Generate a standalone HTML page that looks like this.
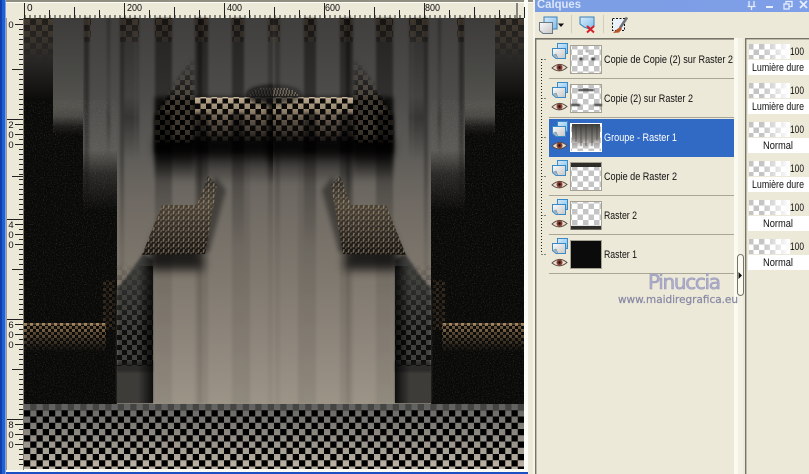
<!DOCTYPE html>
<html>
<head>
<meta charset="utf-8">
<style>
html,body{margin:0;padding:0;background:#ece9d8;width:809px;height:474px;overflow:hidden}
svg{display:block}
text{font-family:"Liberation Sans",sans-serif}
</style>
</head>
<body>
<svg width="809" height="474" viewBox="0 0 809 474" xmlns="http://www.w3.org/2000/svg">
<defs>
<linearGradient id="curt" gradientUnits="userSpaceOnUse" x1="0" y1="18" x2="0" y2="404">
<stop offset="0" stop-color="#403f3d"/><stop offset=".2" stop-color="#4d4c4a"/><stop offset=".35" stop-color="#5e5c58"/><stop offset=".47" stop-color="#6e6962"/><stop offset=".68" stop-color="#80796f"/><stop offset=".85" stop-color="#8f877c"/><stop offset="1" stop-color="#9c9487"/>
</linearGradient>
<linearGradient id="stripeA" x1="0" y1="0" x2="0" y2="1">
<stop offset="0" stop-color="#000" stop-opacity=".45"/><stop offset=".3" stop-color="#000" stop-opacity=".34"/><stop offset=".45" stop-color="#000" stop-opacity=".22"/><stop offset=".6" stop-color="#000" stop-opacity=".09"/><stop offset="1" stop-color="#000" stop-opacity=".07"/>
</linearGradient>
<linearGradient id="stripeB" gradientUnits="userSpaceOnUse" x1="0" y1="18" x2="0" y2="160">
<stop offset="0" stop-color="#000" stop-opacity=".3"/><stop offset=".55" stop-color="#000" stop-opacity=".13"/><stop offset=".7" stop-color="#000" stop-opacity=".35"/><stop offset="1" stop-color="#000" stop-opacity="0"/>
</linearGradient>
<linearGradient id="cornerG" x1="0" y1="0" x2="0" y2="1">
<stop offset="0" stop-color="#3e3b37"/><stop offset=".45" stop-color="#2b2a28"/><stop offset=".85" stop-color="#151412"/><stop offset="1" stop-color="#090908"/>
</linearGradient>
<linearGradient id="col2G" gradientUnits="userSpaceOnUse" x1="0" y1="18" x2="0" y2="135">
<stop offset="0" stop-color="#3d3c3a"/><stop offset=".5" stop-color="#4a4a47"/><stop offset=".75" stop-color="#55544f"/><stop offset=".84" stop-color="#4a4945"/><stop offset=".93" stop-color="#1c1b19"/><stop offset="1" stop-color="#0a0a09"/>
</linearGradient>
<linearGradient id="col3G" gradientUnits="userSpaceOnUse" x1="0" y1="150" x2="0" y2="210">
<stop offset="0" stop-color="#0a0a09" stop-opacity="0"/><stop offset=".4" stop-color="#0a0a09" stop-opacity=".65"/><stop offset="1" stop-color="#0a0a09" stop-opacity="1"/>
</linearGradient>
<linearGradient id="bandDark" gradientUnits="userSpaceOnUse" x1="0" y1="97" x2="0" y2="184">
<stop offset="0" stop-color="#000" stop-opacity=".7"/><stop offset=".35" stop-color="#000" stop-opacity=".85"/><stop offset=".58" stop-color="#000" stop-opacity=".82"/><stop offset=".82" stop-color="#000" stop-opacity=".28"/><stop offset="1" stop-color="#000" stop-opacity="0"/>
</linearGradient>
<linearGradient id="sideDark" gradientUnits="userSpaceOnUse" x1="0" y1="55" x2="0" y2="178">
<stop offset="0" stop-color="#000" stop-opacity="0"/><stop offset=".35" stop-color="#000" stop-opacity=".4"/><stop offset=".68" stop-color="#000" stop-opacity=".82"/><stop offset="1" stop-color="#000" stop-opacity="0"/>
</linearGradient>
<linearGradient id="tanFade" gradientUnits="userSpaceOnUse" x1="0" y1="97" x2="0" y2="141">
<stop offset="0" stop-color="#bcab90"/><stop offset=".25" stop-color="#9c8c74"/><stop offset=".55" stop-color="#5b5044"/><stop offset="1" stop-color="#2a2622"/>
</linearGradient>
<linearGradient id="sideFadeM" gradientUnits="userSpaceOnUse" x1="0" y1="55" x2="0" y2="142">
<stop offset="0" stop-color="#fff" stop-opacity="0"/><stop offset=".5" stop-color="#fff" stop-opacity=".55"/><stop offset="1" stop-color="#fff" stop-opacity=".55"/>
</linearGradient>
<linearGradient id="topFadeM" gradientUnits="userSpaceOnUse" x1="0" y1="18" x2="0" y2="60">
<stop offset="0" stop-color="#fff" stop-opacity=".6"/><stop offset=".6" stop-color="#fff" stop-opacity=".28"/><stop offset="1" stop-color="#fff" stop-opacity="0"/>
</linearGradient>
<linearGradient id="lowBandM" gradientUnits="userSpaceOnUse" x1="0" y1="323" x2="0" y2="352">
<stop offset="0" stop-color="#fff" stop-opacity=".9"/><stop offset=".5" stop-color="#fff" stop-opacity=".45"/><stop offset="1" stop-color="#fff" stop-opacity="0"/>
</linearGradient>
<linearGradient id="lowCellM" gradientUnits="userSpaceOnUse" x1="0" y1="262" x2="0" y2="335">
<stop offset="0" stop-color="#fff" stop-opacity="0"/><stop offset="1" stop-color="#fff" stop-opacity=".8"/>
</linearGradient>
<linearGradient id="edgeShadow" x1="0" y1="0" x2="1" y2="0">
<stop offset="0" stop-color="#000" stop-opacity="0"/><stop offset="1" stop-color="#000" stop-opacity=".78"/>
</linearGradient>
<linearGradient id="floorG" gradientUnits="userSpaceOnUse" x1="0" y1="404" x2="0" y2="469">
<stop offset="0" stop-color="#626260"/><stop offset=".5" stop-color="#8f8b83"/><stop offset="1" stop-color="#c0b6a7"/>
</linearGradient>
<linearGradient id="paraG" gradientUnits="userSpaceOnUse" x1="0" y1="176" x2="0" y2="255">
<stop offset="0" stop-color="#2a2825"/><stop offset=".36" stop-color="#4a4338"/><stop offset=".7" stop-color="#2f2a25"/><stop offset="1" stop-color="#141210"/>
</linearGradient>
<linearGradient id="whiteFade" x1="0" y1="0" x2="1" y2="0">
<stop offset="0" stop-color="#fff" stop-opacity="0"/><stop offset="1" stop-color="#fff"/>
</linearGradient>
<linearGradient id="thumbG" x1="0" y1="0" x2="0" y2="1">
<stop offset="0" stop-color="#3e3e3c"/><stop offset=".6" stop-color="#87837e"/><stop offset="1" stop-color="#8f8a84" stop-opacity="0"/>
</linearGradient>
<linearGradient id="ptitle" x1="0" y1="0" x2="1" y2="0">
<stop offset="0" stop-color="#7b9ee3"/><stop offset="1" stop-color="#7f9fe8"/>
</linearGradient>
<linearGradient id="iconBack" x1="0" y1="0" x2="1" y2="1">
<stop offset="0" stop-color="#d7ecfb"/><stop offset="1" stop-color="#7fbdec"/>
</linearGradient>
<linearGradient id="iconFront" x1="0" y1="0" x2="1" y2="1">
<stop offset="0" stop-color="#fbfbfb"/><stop offset="1" stop-color="#c6c6c6"/>
</linearGradient>

<filter id="b1" x="-60%" y="-10%" width="220%" height="120%"><feGaussianBlur stdDeviation="1.4"/></filter>
<filter id="b2" x="-30%" y="-30%" width="160%" height="160%"><feGaussianBlur stdDeviation="2.5"/></filter>
<filter id="b5" x="-30%" y="-60%" width="160%" height="220%"><feGaussianBlur stdDeviation="5"/></filter>
<filter id="tb" x="-30%" y="-30%" width="160%" height="160%"><feGaussianBlur stdDeviation=".7"/></filter>
<filter id="noise" x="0" y="0" width="100%" height="100%">
<feTurbulence type="fractalNoise" baseFrequency=".9" numOctaves="2" seed="4"/>
<feColorMatrix values="0 0 0 0 .32  0 0 0 0 .3  0 0 0 0 .27  1.6 0 0 0 -.85"/>
</filter>

<mask id="mSide" maskUnits="userSpaceOnUse" x="0" y="0" width="809" height="474"><path d="M194 55L155 118V143H194Z" fill="url(#sideFadeM)" filter="url(#b2)"/></mask>
<mask id="mTop" maskUnits="userSpaceOnUse" x="0" y="0" width="809" height="474"><rect x="20" y="18" width="260" height="45" fill="url(#topFadeM)"/></mask>
<mask id="mLow" maskUnits="userSpaceOnUse" x="0" y="0" width="809" height="474"><rect x="20" y="320" width="100" height="35" fill="url(#lowBandM)"/></mask>
<mask id="mCell" maskUnits="userSpaceOnUse" x="0" y="0" width="809" height="474"><rect x="117" y="260" width="36" height="110" fill="url(#lowCellM)"/></mask>

<pattern id="chkTop" patternUnits="userSpaceOnUse" width="12" height="12" x="24" y="19">
<rect x="0" y="0" width="6" height="6" fill="#4a3a28" fill-opacity=".75"/><rect x="6" y="0" width="6" height="6" fill="#0c0a08"/><rect x="0" y="6" width="6" height="6" fill="#0c0a08"/><rect x="6" y="6" width="6" height="6" fill="#4a3a28" fill-opacity=".75"/>
</pattern>
<pattern id="chkSide" patternUnits="userSpaceOnUse" width="10" height="10" x="155" y="60">
<rect width="5" height="5" fill="#6f6250"/><rect x="5" y="5" width="5" height="5" fill="#6f6250"/><rect x="5" width="5" height="5" fill="#000"/><rect y="5" width="5" height="5" fill="#000"/>
</pattern>
<pattern id="chkBand" patternUnits="userSpaceOnUse" width="11" height="11" x="195" y="98">
<rect x="5.5" width="5.5" height="5.5" fill="#0a0908"/><rect y="5.5" width="5.5" height="5.5" fill="#0a0908"/>
</pattern>
<pattern id="chkLow" patternUnits="userSpaceOnUse" width="6" height="6" x="24" y="323">
<rect width="3" height="3" fill="#a8875f"/><rect x="3" y="3" width="3" height="3" fill="#8a6e4c"/>
</pattern>
<pattern id="chkDim" patternUnits="userSpaceOnUse" width="6" height="6" x="103" y="270">
<rect width="3" height="3" fill="#6b5238"/><rect x="3" y="3" width="3" height="3" fill="#4a3926"/>
</pattern>
<pattern id="chkDark" patternUnits="userSpaceOnUse" width="10" height="10" x="117" y="270">
<rect x="5" width="5" height="5" fill="#000"/><rect y="5" width="5" height="5" fill="#000"/>
</pattern>
<pattern id="chkFloor" patternUnits="userSpaceOnUse" width="12.5" height="12.5" x="24" y="404">
<rect x="6.25" width="6.25" height="6.25" fill="#000"/><rect y="6.25" width="6.25" height="6.25" fill="#000"/>
</pattern>
<pattern id="meshDots" patternUnits="userSpaceOnUse" width="5" height="5.5" x="142" y="205">
<path d="M1.2 .3L2.8 .3 2 3.8 .4 3.8Z" fill="#cdb998"/><path d="M3.7 3 5 3 4.4 5.4 3 5.4Z" fill="#a4927a"/>
</pattern>
<pattern id="thumbChk" patternUnits="userSpaceOnUse" width="11" height="11">
<rect width="11" height="11" fill="#fff"/><rect width="5.5" height="5.5" fill="#c4c4c4"/><rect x="5.5" y="5.5" width="5.5" height="5.5" fill="#c4c4c4"/>
</pattern>
<pattern id="hTick" patternUnits="userSpaceOnUse" width="5" height="4" x="24.5" y="15">
<rect width="1" height="4" fill="#222"/>
</pattern>
<pattern id="vTick" patternUnits="userSpaceOnUse" width="4" height="5" x="19" y="19">
<rect width="4" height="1" fill="#222"/>
</pattern>

<g id="half">
<rect x="83" y="18" width="192" height="386" fill="url(#curt)"/>
<g filter="url(#b1)">
<rect x="84" y="18" width="5" height="386" fill="url(#stripeA)"/>
<rect x="107" y="18" width="3" height="160" fill="url(#stripeB)"/>
<rect x="120" y="18" width="4" height="386" fill="url(#stripeA)"/>
<rect x="124" y="18" width="11" height="150" fill="url(#stripeB)"/>
<rect x="136" y="18" width="3" height="140" fill="url(#stripeB)"/>
<rect x="155" y="18" width="17" height="386" fill="url(#stripeA)"/>
<rect x="195" y="18" width="13" height="386" fill="url(#stripeA)"/>
<rect x="198" y="18" width="4" height="386" fill="url(#stripeA)"/>
<rect x="232" y="18" width="12" height="386" fill="url(#stripeA)"/>
<rect x="244" y="150" width="6" height="254" fill="#000" fill-opacity=".08"/>
<rect x="268" y="18" width="5" height="386" fill="url(#stripeA)" opacity=".6"/>
</g>
<rect x="24" y="18" width="29" height="84" fill="url(#cornerG)"/>
<rect x="53" y="18" width="30" height="117" fill="url(#col2G)"/>
<rect x="24" y="100" width="29" height="304" fill="#090908"/>
<rect x="53" y="134" width="30" height="270" fill="#090908"/>
<rect x="83" y="150" width="34" height="60" fill="url(#col3G)"/>
<rect x="83" y="210" width="34" height="194" fill="#090908"/>
<rect x="24" y="100" width="93" height="304" filter="url(#noise)" opacity=".55"/>
<g mask="url(#mTop)">
<rect x="24" y="18" width="29" height="42" fill="url(#chkTop)"/>
<rect x="84" y="18" width="7" height="24" fill="url(#chkTop)"/>
<rect x="120" y="18" width="19" height="24" fill="url(#chkTop)"/>
<rect x="155" y="18" width="17" height="24" fill="url(#chkTop)"/>
<rect x="195" y="18" width="13" height="24" fill="url(#chkTop)"/>
<rect x="232" y="18" width="12" height="24" fill="url(#chkTop)"/>
<rect x="268" y="18" width="7" height="24" fill="url(#chkTop)"/>
</g>
<path d="M194 55L155 118V178H194Z" fill="url(#sideDark)" filter="url(#b2)"/>
<rect x="155" y="97" width="125" height="87" fill="url(#bandDark)" filter="url(#b2)"/>
<rect x="155" y="55" width="40" height="88" fill="url(#chkSide)" mask="url(#mSide)"/>
<rect x="195" y="97" width="80" height="44" fill="url(#tanFade)"/>
<rect x="195" y="97" width="80" height="44" fill="url(#chkBand)"/>
<rect x="195" y="97" width="80" height="2" fill="#d4c4aa" fill-opacity=".45"/>
<rect x="195" y="113" width="13" height="40" fill="#000" fill-opacity=".5" filter="url(#b1)"/>
<rect x="232" y="113" width="12" height="40" fill="#000" fill-opacity=".5" filter="url(#b1)"/>
<rect x="155" y="113" width="17" height="40" fill="#000" fill-opacity=".45" filter="url(#b1)"/>
<rect x="155" y="138" width="125" height="18" fill="#0a0908" fill-opacity=".6" filter="url(#b5)"/>
<ellipse cx="274" cy="95" rx="27" ry="9" fill="#0c0b0a" fill-opacity=".65" filter="url(#b2)"/>
<path d="M250 95H275M252 93H275M255 91H275M260 89H275" stroke="#b4a488" stroke-width="1" stroke-dasharray="1.5 1.5"/>
<rect x="24" y="323" width="82" height="30" fill="url(#chkLow)" mask="url(#mLow)"/>
<rect x="24" y="323" width="82" height="2" fill="#c6a47a" fill-opacity=".3"/>
<rect x="103" y="280" width="12" height="50" fill="url(#chkDim)" opacity=".4"/>
<path d="M117 290L143 254L153 260V403H117Z" fill="#41403c" filter="url(#b1)"/>
<rect x="117" y="262" width="36" height="104" fill="url(#chkDark)" mask="url(#mCell)"/>
<rect x="117" y="366" width="36" height="37" fill="#3d3c39"/>
<rect x="117" y="362" width="36" height="10" fill="#141312" fill-opacity=".45" filter="url(#tb)"/>
<rect x="138" y="266" width="15" height="137" fill="url(#edgeShadow)"/>
<path d="M146 262L162 222H198L204 270H150Z" fill="#000" fill-opacity=".75" filter="url(#b5)"/>
<path d="M215 176L226 190L209 252H200Z" fill="#000" fill-opacity=".4" filter="url(#b2)"/>
<path d="M142 255L162 205H197L208 176L217 185L205 254Z" fill="url(#paraG)"/>
</g>
</defs>

<rect width="809" height="474" fill="#ece9d8"/>
<rect x="0" y="0" width="6" height="474" fill="#1f5fd8"/>
<rect x="0" y="0" width="2" height="474" fill="#0f3fa8"/>
<rect x="5" y="0" width="1" height="474" fill="#7fa3e0"/>
<rect x="6" y="0" width="521" height="474" fill="#fbfaf3"/>
<rect x="7" y="18" width="16" height="452" fill="#ece9d8"/>
<rect x="6" y="0" width="527" height="18" fill="#ece9d8"/>
<rect x="6" y="0" width="527" height="2" fill="#8f8d80"/>
<rect x="6" y="2" width="527" height="1" fill="#fdfdf8"/>
<rect x="6" y="18" width="1" height="452" fill="#9c9a8c"/>
<rect x="524" y="0" width="4" height="472" fill="#fdfdf8"/>
<rect x="6" y="472" width="522" height="2" fill="#1a50c4"/>

<rect x="24.5" y="15" width="500" height="3" fill="url(#hTick)"/>
<path d="M24.5 3V18M124.5 3V18M224.5 3V18M324.5 3V18M424.5 3V18M517 3V18M49.5 10V18M74.5 7V18M99.5 10V18M149.5 10V18M174.5 7V18M199.5 10V18M249.5 10V18M274.5 7V18M299.5 10V18M349.5 10V18M374.5 7V18M399.5 10V18M449.5 10V18M474.5 7V18M499.5 10V18M524.5 7V18" stroke="#222" stroke-width="1"/>
<text x="27" y="11" font-size="10" fill="#111">0</text>
<text x="127" y="11" font-size="10" fill="#111" textLength="15" lengthAdjust="spacingAndGlyphs">200</text>
<text x="227" y="11" font-size="10" fill="#111" textLength="15" lengthAdjust="spacingAndGlyphs">400</text>
<text x="325" y="11" font-size="10" fill="#111" textLength="15" lengthAdjust="spacingAndGlyphs">600</text>
<text x="425" y="11" font-size="10" fill="#111" textLength="15" lengthAdjust="spacingAndGlyphs">800</text>

<rect x="19" y="19" width="4" height="450" fill="url(#vTick)"/>
<path d="M7 119.5H23M7 219.5H23M7 319.5H23M7 419.5H23M12 69.5H23M12 176.5H23M12 269.5H23M12 369.5H23M15 24.5H23M15 124.5H23M15 134.5H23M15 144.5H23M15 224.5H23M15 234.5H23M15 244.5H23M15 324.5H23M15 334.5H23M15 344.5H23M15 424.5H23M15 434.5H23M15 444.5H23" stroke="#222" stroke-width="1"/>
<g font-size="9.5" fill="#111" text-anchor="middle">
<text x="11" y="28">0</text>
<text x="11" y="128">2</text><text x="11" y="138">0</text><text x="11" y="148">0</text>
<text x="11" y="228">4</text><text x="11" y="238">0</text><text x="11" y="248">0</text>
<text x="11" y="328">6</text><text x="11" y="338">0</text><text x="11" y="348">0</text>
<text x="11" y="428">8</text><text x="11" y="438">0</text><text x="11" y="448">0</text>
</g>

<rect x="23" y="18" width="1" height="452" fill="#7d7b70"/>
<rect x="24" y="18" width="500" height="1" fill="#7d7b70"/>
<use href="#half"/>
<use href="#half" transform="translate(548 0) scale(-1 1)"/>
<path d="M142 255L162 205H197L208 176L217 185L205 254Z" fill="url(#meshDots)" opacity=".5"/>
<path d="M406 255L386 205H351L340 176L331 185L343 254Z" fill="url(#meshDots)" opacity=".5"/>
<rect x="24" y="404" width="500" height="65" fill="url(#floorG)"/>
<rect x="24" y="404" width="500" height="65" fill="url(#chkFloor)"/>
<rect x="24" y="404" width="500" height="6" fill="#616160" fill-opacity=".7"/>

<rect x="533" y="0" width="276" height="474" fill="#ece9d8"/>
<rect x="533" y="0" width="2" height="474" fill="#f7f5ea"/>
<rect x="535" y="0" width="274" height="12" fill="url(#ptitle)"/>
<text x="537" y="8" font-size="11.5" font-weight="bold" fill="#dbe6fa" textLength="44" lengthAdjust="spacingAndGlyphs">Calques</text>
<g fill="none" stroke="#e6edfb" stroke-width="1.3">
<path d="M749 1V6M754 1V6M747.5 6.5H755.5M751.5 6.5V10"/>
<path d="M766 7H773" stroke-width="2"/>
<rect x="784" y="4" width="5" height="5"/><path d="M786 4V1.5H792V6.5H789"/>
<path d="M800 1L807 8M807 1L800 8" stroke-width="1.8"/>
</g>

<path d="M571.5 15V33M603.5 15V33" stroke="#d0cdbb"/>
<rect x="544" y="17" width="13" height="12" fill="url(#iconBack)" stroke="#3a7fb8"/>
<path d="M539.5 22.5H552.5V33.5H543L539.5 30.5Z" fill="url(#iconFront)" stroke="#6a7a85"/>
<path d="M558 23.5H564L561 27Z" fill="#111"/>
<path d="M580 17H594V26L589 29L584 27L580 24Z" fill="url(#iconBack)" stroke="#3a7fb8"/>
<path d="M587 26L594 32.5M594 26L587 32.5" stroke="#d6202a" stroke-width="2"/>
<rect x="612.5" y="18.5" width="12" height="12" fill="#eaf2fa" stroke="#111" stroke-dasharray="2 1.5"/>
<path d="M627 17.5L620 28" stroke="#6f6f78" stroke-width="2.6"/>
<path d="M620 27L616 30L613 33L619 32.5L622 29Z" fill="#b4552c"/>

<rect x="535" y="38" width="199" height="436" fill="#ece9d8"/>
<rect x="535" y="38" width="200" height="1.6" fill="#77756a"/>
<rect x="535" y="38" width="1.4" height="436" fill="#77756a"/>
<rect x="734" y="38" width="4" height="436" fill="#fbfaf0"/>
<rect x="738" y="38" width="5" height="436" fill="#f3f1e4"/>
<rect x="743" y="38" width="2" height="436" fill="#ece9d8"/>
<rect x="745" y="38" width="1.4" height="436" fill="#77756a"/>
<rect x="745" y="38" width="64" height="1.4" fill="#77756a"/>
<rect x="737.5" y="254.5" width="6" height="41" rx="3" fill="#fbfaf0" stroke="#77756a"/>
<path d="M738.5 272L742 275.5L738.5 279Z" fill="#111"/>

<path d="M541.5 59V254" stroke="#222" stroke-dasharray="1 2" fill="none"/>
<path d="M541.5 59.5H546M541.5 98.5H546M541.5 137.5H546M541.5 176.5H546M541.5 215.5H546M541.5 254.5H546" stroke="#222" stroke-dasharray="1 2"/>

<g fill="#a9a695">
<rect x="549" y="78" width="185" height="1"/>
<rect x="549" y="117" width="185" height="1"/>
<rect x="549" y="195" width="185" height="1"/>
<rect x="549" y="234" width="185" height="1"/>
<rect x="549" y="273" width="185" height="1"/>
</g>
<rect x="549" y="119" width="185" height="38" fill="#316ac5"/>

<g id="ic">
<rect x="557.5" y="43.5" width="10" height="10" fill="url(#iconBack)" stroke="#3a8ac8"/>
<path d="M552.5 48.5H565.5V58.5H556L552.5 55.5Z" fill="url(#iconFront)" stroke="#3a8ac8"/>
<path d="M552.5 55.5L556 54L558 58.5" fill="#9db7c9" stroke="#7a8d98" stroke-width=".6"/>
<path d="M552 68Q559.5 61 567 67.5Q559.5 74 552 68Z" fill="#e6ddd3" stroke="#5a4a42" stroke-width=".9"/>
<circle cx="559.5" cy="67.5" r="3" fill="#8a3f30"/>
<circle cx="559.5" cy="67.5" r="1.2" fill="#1c1211"/>
</g>
<use href="#ic" y="39"/>
<use href="#ic" y="78"/>
<use href="#ic" y="117"/>
<use href="#ic" y="156"/>
<use href="#ic" y="195"/>

<g stroke="#a5a294" stroke-width="1">
<rect x="570.5" y="45.5" width="31" height="28" fill="url(#thumbChk)"/>
<rect x="570.5" y="84.5" width="31" height="28" fill="url(#thumbChk)"/>
<rect x="570.5" y="123.5" width="31" height="28" fill="url(#thumbChk)" stroke="#fff"/>
<rect x="570.5" y="162.5" width="31" height="28" fill="url(#thumbChk)"/>
<rect x="570.5" y="201.5" width="31" height="28" fill="url(#thumbChk)"/>
<rect x="570.5" y="240.5" width="31" height="28" fill="#0b0b0b"/>
</g>
<g filter="url(#tb)" fill="#2a2a2a">
<ellipse cx="581" cy="59" rx="2" ry="1.5"/><ellipse cx="593" cy="59" rx="2" ry="1.5"/><ellipse cx="587" cy="51" rx="1.5" ry="1" fill="#777"/>
<rect x="578" y="89" width="16" height="2"/><rect x="571" y="104" width="9" height="2"/><rect x="594" y="104" width="8" height="2"/>
</g>
<rect x="572" y="124" width="28" height="24" fill="url(#thumbG)"/>
<path d="M576 124V142M581 124V146M586 124V146M592 124V146M597 124V140" stroke="#333" stroke-width="1.2" opacity=".5"/>
<rect x="571" y="163" width="30" height="4" fill="#2e2d2a"/>
<rect x="571" y="226" width="30" height="3.5" fill="#2e2d2a"/>

<g font-size="11" fill="#111">
<text x="604" y="63" textLength="129" lengthAdjust="spacingAndGlyphs">Copie de Copie (2) sur Raster 2</text>
<text x="604" y="102" textLength="89" lengthAdjust="spacingAndGlyphs">Copie (2) sur Raster 2</text>
<text x="604" y="141" textLength="73" lengthAdjust="spacingAndGlyphs" fill="#fff">Groupe - Raster 1</text>
<text x="604" y="180" textLength="73" lengthAdjust="spacingAndGlyphs">Copie de Raster 2</text>
<text x="604" y="219" textLength="33" lengthAdjust="spacingAndGlyphs">Raster 2</text>
<text x="604" y="258" textLength="33" lengthAdjust="spacingAndGlyphs">Raster 1</text>
</g>

<g id="rc">
<rect x="749" y="44" width="41" height="15" fill="url(#thumbChk)"/>
<rect x="762" y="44" width="28" height="15" fill="url(#whiteFade)"/>
<text x="790" y="55" font-size="11" fill="#111" textLength="14" lengthAdjust="spacingAndGlyphs">100</text>
<rect x="748" y="60" width="61" height="15" fill="#fff"/>
</g>
<use href="#rc" y="39"/>
<use href="#rc" y="78"/>
<use href="#rc" y="117"/>
<use href="#rc" y="156"/>
<use href="#rc" y="195"/>
<g font-size="11" fill="#111">
<text x="752" y="71" textLength="52" lengthAdjust="spacingAndGlyphs">Lumière dure</text>
<text x="752" y="110" textLength="52" lengthAdjust="spacingAndGlyphs">Lumière dure</text>
<text x="763" y="149" textLength="30" lengthAdjust="spacingAndGlyphs">Normal</text>
<text x="752" y="188" textLength="52" lengthAdjust="spacingAndGlyphs">Lumière dure</text>
<text x="763" y="227" textLength="30" lengthAdjust="spacingAndGlyphs">Normal</text>
<text x="763" y="266" textLength="30" lengthAdjust="spacingAndGlyphs">Normal</text>
</g>

<text x="648" y="289" font-size="20" fill="#aeaecb" stroke="#9c9cbc" stroke-width=".6" style="font-family:'DejaVu Sans',sans-serif" textLength="73" lengthAdjust="spacing">Pinuccia</text>
<text x="618" y="303" font-size="10.5" fill="#8a8aa6" stroke="#8a8aa6" stroke-width=".25" style="font-family:'DejaVu Sans',sans-serif" textLength="120" lengthAdjust="spacingAndGlyphs">www.maidiregrafica.eu</text>
</svg>
</body>
</html>
